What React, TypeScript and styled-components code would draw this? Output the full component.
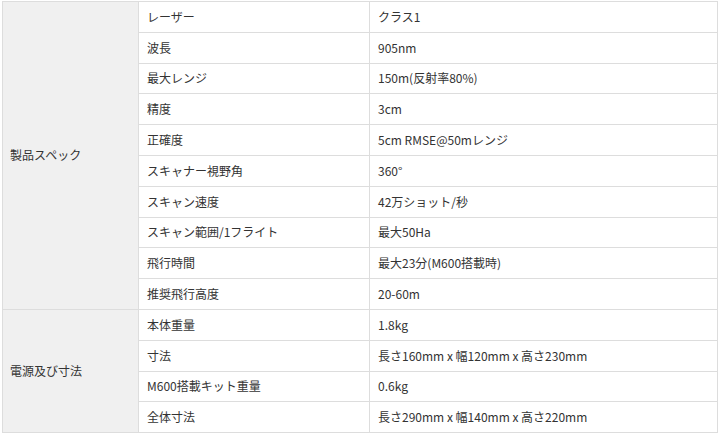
import React from "react";
import styled, { createGlobalStyle } from "styled-components";

const Global = createGlobalStyle`
  html, body { margin: 0; padding: 0; background: #fff; }
  body { font-family: "Noto Sans CJK JP", "Noto Sans", sans-serif; color: #333; }
`;

const Table = styled.table`
  margin: 1px 0 0 2px;
  width: 715px;
  border-collapse: collapse;
  table-layout: fixed;
  font-size: 12px;
  line-height: 16px;
`;

const Col = styled.col<{ $w: number }>`
  width: ${(p) => p.$w}px;
`;

const Row = styled.tr`
  height: 30.8px;
`;

const Group = styled.th`
  background: #f0f0f0;
  border: 1px solid #dddddd;
  text-align: left;
  font-weight: 400;
  padding: 0 7px;
  vertical-align: middle;
`;

const Cell = styled.td`
  border: 1px solid #dddddd;
  padding: 0 8px;
  vertical-align: middle;
  white-space: nowrap;
`;

type Spec = [string, string];

const groups: { name: string; rows: Spec[] }[] = [
  {
    name: "製品スペック",
    rows: [
      ["レーザー", "クラス1"],
      ["波長", "905nm"],
      ["最大レンジ", "150m(反射率80%)"],
      ["精度", "3cm"],
      ["正確度", "5cm RMSE@50mレンジ"],
      ["スキャナー視野角", "360°"],
      ["スキャン速度", "42万ショット/秒"],
      ["スキャン範囲/1フライト", "最大50Ha"],
      ["飛行時間", "最大23分(M600搭載時)"],
      ["推奨飛行高度", "20-60m"],
    ],
  },
  {
    name: "電源及び寸法",
    rows: [
      ["本体重量", "1.8kg"],
      ["寸法", "長さ160mm x 幅120mm x 高さ230mm"],
      ["M600搭載キット重量", "0.6kg"],
      ["全体寸法", "長さ290mm x 幅140mm x 高さ220mm"],
    ],
  },
];

export default function App() {
  return (
    <>
      <Global />
      <Table>
        <colgroup>
          <Col $w={136} />
          <Col $w={231} />
          <Col $w={348} />
        </colgroup>
        <tbody>
          {groups.map((g) =>
            g.rows.map(([k, v], i) => (
              <Row key={g.name + k}>
                {i === 0 && <Group rowSpan={g.rows.length}>{g.name}</Group>}
                <Cell>{k}</Cell>
                <Cell>{v}</Cell>
              </Row>
            ))
          )}
        </tbody>
      </Table>
    </>
  );
}
